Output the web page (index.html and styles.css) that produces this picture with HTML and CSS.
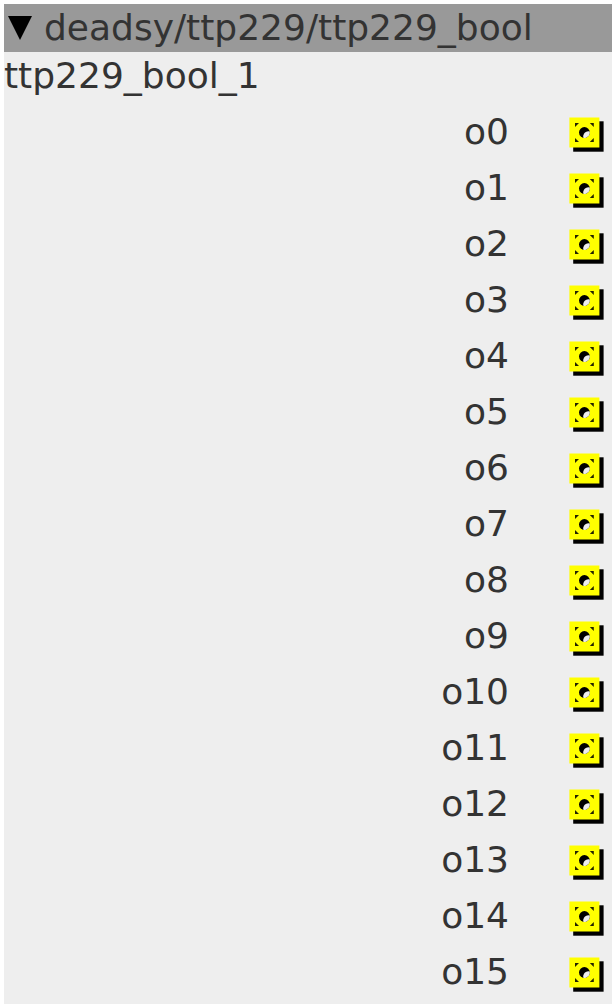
FILE: index.html
```html
<!DOCTYPE html>
<html lang="en">
<head>
    <meta charset="UTF-8">
    <meta name="viewport" content="width=device-width, initial-scale=1.0">
    <title>deadsy/ttp229/ttp229_bool</title>
    <link rel="stylesheet" href="styles.css">
</head>
<body>
    <!-- boolean outlet: socket with drop shadow -->
    <svg class="defs" aria-hidden="true">
        <symbol id="outlet" viewBox="-0.4 -0.5 35 35">
            <rect x="3.8" y="3.8" width="30.4" height="30.4" fill="#000"/>
            <rect x="0" y="0" width="30" height="30" fill="#ff0"/>
            <path d="M5.6 5.6h4l-4 4zM24.4 5.6v4l-4-4zM5.6 24.4v-4l4 4zM24.4 24.4h-4l4-4z" fill="#220"/>
            <circle cx="15" cy="15" r="8.8" fill="#ff0"/>
            <circle cx="15" cy="15" r="5.4" fill="#000"/>
            <path d="M20.3 13.9A5.4 5.4 0 0 1 13.9 20.3A5.4 5.4 0 0 1 20.3 13.9z" fill="#eee"/>
        </symbol>
    </svg>

    <div class="object">
        <div class="title-bar">
            <button class="menu-btn" type="button" aria-label="Object menu">
                <svg class="arrow" viewBox="0 0 24 24"><path d="M0 0h24L12 24z"/></svg>
            </button>
            <h1>deadsy/ttp229/ttp229_bool</h1>
        </div>
        <div class="instance-name">ttp229_bool_1</div>

        <ul class="outlets">
            <li><span>o0</span><svg class="outlet"><use href="#outlet"/></svg></li>
            <li><span>o1</span><svg class="outlet"><use href="#outlet"/></svg></li>
            <li><span>o2</span><svg class="outlet"><use href="#outlet"/></svg></li>
            <li><span>o3</span><svg class="outlet"><use href="#outlet"/></svg></li>
            <li><span>o4</span><svg class="outlet"><use href="#outlet"/></svg></li>
            <li><span>o5</span><svg class="outlet"><use href="#outlet"/></svg></li>
            <li><span>o6</span><svg class="outlet"><use href="#outlet"/></svg></li>
            <li><span>o7</span><svg class="outlet"><use href="#outlet"/></svg></li>
            <li><span>o8</span><svg class="outlet"><use href="#outlet"/></svg></li>
            <li><span>o9</span><svg class="outlet"><use href="#outlet"/></svg></li>
            <li><span>o10</span><svg class="outlet"><use href="#outlet"/></svg></li>
            <li><span>o11</span><svg class="outlet"><use href="#outlet"/></svg></li>
            <li><span>o12</span><svg class="outlet"><use href="#outlet"/></svg></li>
            <li><span>o13</span><svg class="outlet"><use href="#outlet"/></svg></li>
            <li><span>o14</span><svg class="outlet"><use href="#outlet"/></svg></li>
            <li><span>o15</span><svg class="outlet"><use href="#outlet"/></svg></li>
        </ul>
    </div>
</body>
</html>
```
FILE: styles.css
```css
* { margin: 0; padding: 0; box-sizing: border-box; }
body {
    font-family: "DejaVu Sans", sans-serif;
    font-size: 36px; line-height: 48px; color: #333;
    background: #fff; padding: 4px;
}
.defs { display: none; }
.object { background: #eee; }
.title-bar {
    display: flex; align-items: center; gap: 12px;
    background: #999; padding: 0 4px;
}
.title-bar h1 { font-size: 36px; font-weight: normal; }
.menu-btn { display: flex; background: none; border: none; cursor: pointer; }
.arrow { width: 24px; height: 24px; fill: #000; }
.outlets { list-style: none; padding: 4px 8px 4px 0; }
.outlets li {
    display: flex; align-items: flex-start; justify-content: flex-end; gap: 60px;
    line-height: 56px;
}
.outlet { width: 35px; height: 35px; margin-top: 13px; }
```
